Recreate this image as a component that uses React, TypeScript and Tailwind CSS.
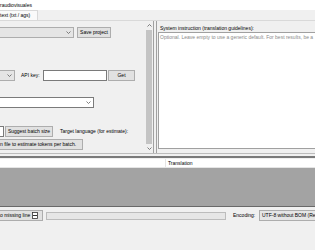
import React from "react";

const font = { fontFamily: '"Liberation Sans", Arial, sans-serif' };

function Arrow({ className = "" }: { className?: string }) {
  return (
    <svg width="5" height="3" viewBox="0 0 5 3" className={className}>
      <path d="M0.5 0.5 L2.5 2.5 L4.5 0.5" fill="none" stroke="#606060" strokeWidth="0.8" />
    </svg>
  );
}

function Btn({ children, className = "" }: { children: React.ReactNode; className?: string }) {
  return (
    <div
      className={`flex h-[11px] shrink-0 items-center justify-center overflow-hidden whitespace-nowrap border border-[#adadad] bg-[#e1e1e1] text-[5px] leading-none text-black ${className}`}
    >
      {children}
    </div>
  );
}

export default function App() {
  return (
    <div className="flex h-[250px] w-[315px] flex-col overflow-hidden bg-[#f0f0f0] text-black" style={font}>
      {/* title line */}
      <div className="flex h-[10px] items-center whitespace-nowrap bg-white text-[5px] leading-none">
        <span>raudiovisuales</span>
      </div>

      {/* tab strip */}
      <div className="flex h-[10px] items-end bg-[#f0f0f0]">
        <div className="flex h-[10px] w-[38px] items-center whitespace-nowrap border-r border-t border-[#d9d9d9] bg-[#fafafa] text-[5px] leading-none">
          <span>text (txt / ags)</span>
        </div>
      </div>

      {/* tab page */}
      <div className="flex h-[133px] border-t border-[#d9d9d9] bg-[#f0f0f0]">
        {/* left panel */}
        <div className="flex w-[145px] shrink-0 flex-col whitespace-nowrap text-[5px] leading-none">
          <div className="mt-[6px] flex items-center">
            <div className="flex h-[11px] w-[74px] shrink-0 items-center justify-end border border-l-0 border-[#adadad] bg-[#e5e5e5] pr-[2px]">
              <Arrow />
            </div>
            <Btn className="ml-[3px] w-[34px]">Save project</Btn>
          </div>

          <div className="mt-[32px] flex items-center">
            <div className="flex h-[11px] w-[15px] shrink-0 items-center justify-end border border-l-0 border-[#adadad] bg-[#e5e5e5] pr-[2px]">
              <Arrow />
            </div>
            <span className="ml-[6px] w-[22px] shrink-0">API key:</span>
            <div className="h-[11px] w-[64px] shrink-0 border border-[#7a7a7a] bg-white" />
            <Btn className="ml-[1px] w-[27px]">Get</Btn>
          </div>

          <div className="mt-[16px] flex items-center">
            <div className="flex h-[11px] w-[94px] items-center justify-end border border-l-0 border-[#7a7a7a] bg-white pr-[2px]">
              <Arrow />
            </div>
          </div>

          <div className="mt-[18px] flex items-center">
            <div className="h-[11px] w-[4px] shrink-0 border border-l-0 border-[#7a7a7a] bg-white" />
            <Btn className="ml-[1px] w-[48px]">Suggest batch size</Btn>
            <span className="ml-[7px]">Target language (for estimate):</span>
          </div>

          <div className="mt-[2px] flex items-center">
            <Btn className="w-[83px] justify-start border-l-0">
              <span>n file to estimate tokens per batch.</span>
            </Btn>
          </div>
        </div>

        {/* scrollbar */}
        <div className="flex w-[8px] shrink-0 flex-col items-center bg-[#f0f0f0]">
          <svg width="5" height="3" viewBox="0 0 5 3" className="mt-[3px]">
            <path d="M0.5 2.5 L2.5 0.5 L4.5 2.5" fill="none" stroke="#606060" strokeWidth="0.8" />
          </svg>
          <div className="mt-[3px] w-[6px] flex-1 bg-[#c4c4c4]" />
          <Arrow className="mb-[3px] mt-[3px]" />
        </div>

        {/* splitter */}
        <div className="w-[4px] shrink-0 border-l border-r border-[#a0a0a0] bg-[#f0f0f0]" />

        {/* right panel */}
        <div className="flex min-w-0 flex-1 flex-col pb-[4px] pl-[1px]">
          <div className="mt-[5px] h-[6px] whitespace-nowrap pl-[2px] text-[5px] leading-none">
            System instruction (translation guidelines):
          </div>
          <div className="flex-1 overflow-hidden whitespace-nowrap border border-r-0 border-[#a0a0a0] bg-white px-[1px] pt-[1px] text-[5px] leading-[7px] text-[#8a8a8a]">
            Optional. Leave empty to use a generic default. For best results, be a
          </div>
        </div>
      </div>

      {/* splitter lines */}
      <div className="h-[1px] bg-[#bcbcbc]" />
      <div className="h-[2px]" />
      <div className="h-[2px] bg-[#7a7a7a]" />
      <div className="h-[1px]" />

      {/* grid */}
      <div className="flex h-[9px] border-b border-[#e5e5e5] bg-white text-[5px] leading-none">
        <div className="w-[166px] shrink-0 border-r border-[#e5e5e5]" />
        <div className="flex items-center pl-[2px]">Translation</div>
      </div>
      <div className="h-[39px] border-b border-[#696969] bg-[#a3a3a3]" />

      {/* status row */}
      <div className="mt-[3px] flex items-center whitespace-nowrap text-[5px] leading-none">
        <Btn className="w-[43px] justify-start border-l-0">
          <span>o missing line</span>
          <svg width="6" height="7" viewBox="0 0 6 7" className="ml-[2px] shrink-0">
            <rect x="0.5" y="0.5" width="5" height="6" fill="white" stroke="#333" strokeWidth="0.8" />
            <path d="M1 3.5 H5" stroke="#333" strokeWidth="1" />
          </svg>
        </Btn>
        <div className="ml-[3px] h-[8px] w-[180px] shrink-0 border border-[#bcbcbc] bg-[#e6e6e6]" />
        <span className="ml-[7px] w-[26px] shrink-0">Encoding:</span>
        <div className="flex h-[11px] min-w-0 flex-1 items-center overflow-hidden whitespace-nowrap border border-r-0 border-[#adadad] bg-[#e5e5e5] pl-[2px]">
          UTF-8 without BOM (Re
        </div>
      </div>
    </div>
  );
}
